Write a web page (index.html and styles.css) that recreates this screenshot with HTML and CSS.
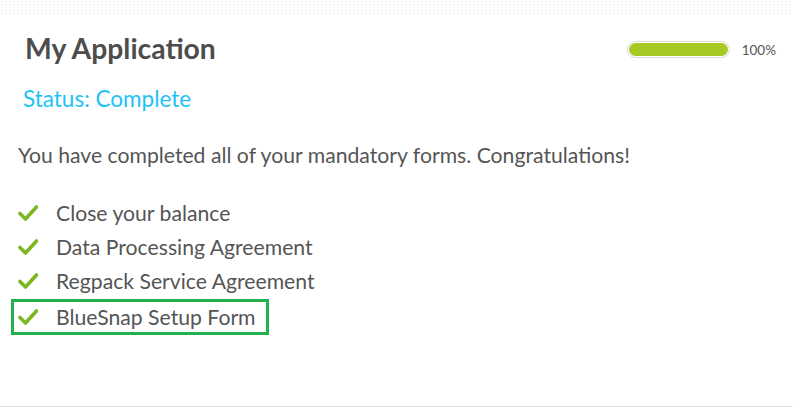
FILE: index.html
```html
<!DOCTYPE html>
<html>
<head>
<meta charset="utf-8">
<link rel="stylesheet" href="styles.css">
</head>
<body>
<div class="topband"></div>
<div class="card">
  <div class="head">
    <h1 class="title">My Application</h1>
    <div class="progress">
      <div class="bar"><div class="fill" style="width:100%"></div></div>
      <span class="pct">100%</span>
    </div>
  </div>
  <div class="status">Status: Complete</div>
  <p class="msg">You have completed all of your mandatory forms. Congratulations!</p>
  <ul class="forms">
    <li><svg class="check" viewBox="0 0 20 16"><path d="M2 8.5 L7.5 14 L18.5 2" /></svg><span>Close your balance</span></li>
    <li><svg class="check" viewBox="0 0 20 16"><path d="M2 8.5 L7.5 14 L18.5 2" /></svg><span>Data Processing Agreement</span></li>
    <li><svg class="check" viewBox="0 0 20 16"><path d="M2 8.5 L7.5 14 L18.5 2" /></svg><span>Regpack Service Agreement</span></li>
    <li class="highlight"><svg class="check" viewBox="0 0 20 16"><path d="M2 8.5 L7.5 14 L18.5 2" /></svg><span>BlueSnap Setup Form</span></li>
  </ul>
</div>
</body>
</html>
```
FILE: styles.css
```css
html, body {
  margin: 0;
  padding: 0;
  background: #fff;
  font-family: Lato, "Open Sans", sans-serif;
  color: #555;
}
.topband {
  height: 14px;
  background-image: radial-gradient(circle, #f1f1f1 0.8px, transparent 1.2px);
  background-size: 4px 3px;
}
.card {
  height: 393px;
  box-sizing: border-box;
  border-bottom: 1px solid #e4e4e4;
  padding: 0 0 0 18px;
}
.head {
  display: flex;
  align-items: flex-start;
  justify-content: space-between;
  padding-top: 17px;
}
.title {
  margin: 0 0 0 7px;
  font-size: 28.3px;
  font-weight: 700;
  line-height: 34px;
  color: #4d4d4d;
}
.progress {
  display: flex;
  align-items: center;
  margin-top: 10px;
  margin-right: 17px;
}
.bar {
  width: 103px;
  height: 17px;
  box-sizing: border-box;
  border: 1px solid #d9d9d9;
  border-radius: 9px;
  padding: 1px;
  background: #fff;
}
.fill {
  height: 100%;
  background: #a6c923;
  border-radius: 8px;
}
.pct {
  margin-left: 12px;
  font-size: 13.5px;
  color: #555;
}
.status {
  margin: 20px 0 0 5px;
  font-size: 22.5px;
  line-height: 28px;
  color: #1cc3f5;
}
.msg {
  margin: 28px 0 0 0;
  font-size: 21.2px;
  line-height: 28px;
  color: #555;
}
.forms {
  list-style: none;
  margin: 27px 0 0 0;
  padding: 0;
}
.forms li {
  display: flex;
  align-items: center;
  height: 34px;
  font-size: 21.2px;
  color: #555;
}
.check {
  width: 20px;
  height: 16px;
  margin-right: 18px;
  flex: none;
}
.check path {
  fill: none;
  stroke: #7cb51f;
  stroke-width: 3.6;
  stroke-linecap: round;
  stroke-linejoin: round;
}
.forms li.highlight {
  align-self: flex-start;
  display: inline-flex;
  margin-top: 1px;
  margin-left: -7px;
  padding: 0 10px 0 4px;
  height: 36px;
  box-sizing: border-box;
  border: 3px solid #22b14c;
}
```
